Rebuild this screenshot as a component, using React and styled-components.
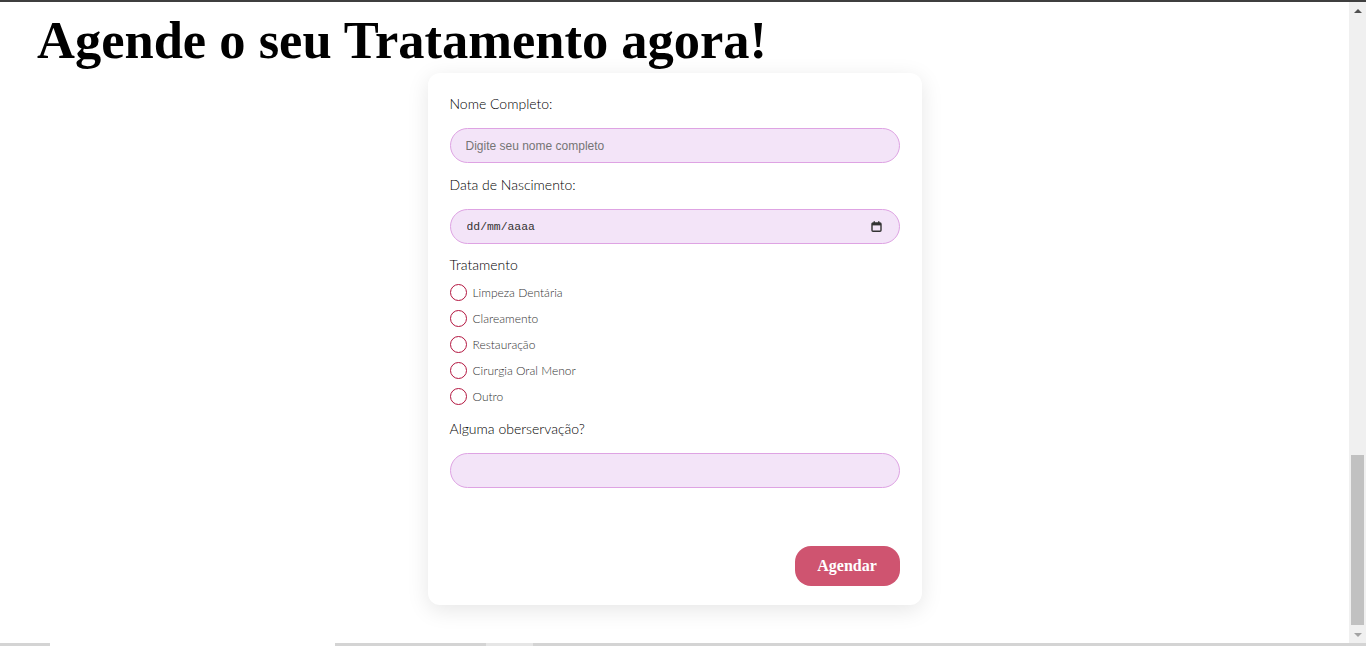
import React from 'react';
import styled, { createGlobalStyle } from 'styled-components';

const GlobalStyle = createGlobalStyle`
    body {
        margin: 0;
        background: #fff;
        font-family: Lato, "Open Sans", sans-serif;
    }
`;

const Window = styled.div`
    display: flex;
    flex-direction: column;
    height: 646px;
    overflow: hidden;
`;

const TopEdge = styled.div`
    height: 2px;
    background: #3f3f3f;
`;

const Viewport = styled.div`
    flex: 1;
    display: flex;
    min-height: 0;
`;

const Page = styled.div`
    flex: 1;
    overflow: hidden;
`;

const ScrollBar = styled.div`
    width: 17px;
    display: flex;
    flex-direction: column;
    background: #f0f0f0;
`;

const ScrollArrow = styled.div`
    height: 17px;
    display: flex;
    align-items: center;
    justify-content: center;
`;

const ScrollTrack = styled.div`
    flex: 1;
    display: flex;
    flex-direction: column;
    justify-content: flex-end;
    padding: 0 2px 1px;
`;

const ScrollThumb = styled.div`
    height: 170px;
    background: #c1c1c1;
`;

const BottomEdge = styled.div`
    height: 3px;
    display: flex;
    background: #d4d4d4;
`;

const EdgeSegment = styled.div`
    margin-left: ${(p) => p.$offset}px;
    width: ${(p) => p.$width}px;
    background: ${(p) => p.$color};
`;

const Title = styled.h1`
    margin: 12px 0 0 37px;
    font-family: "Liberation Serif", serif;
    font-weight: 700;
    font-size: 52.5px;
    line-height: 52px;
    color: #000;
`;

const Card = styled.form`
    width: 450px;
    margin: 7px auto 0;
    padding: 21px 22px 19px;
    background: #fff;
    border-radius: 12px;
    box-shadow: 0 5px 22px rgba(0, 0, 0, 0.1);
`;

const Label = styled.label`
    display: block;
    margin: ${(p) => p.$top}px 0 ${(p) => (p.$tight ? 4 : 14)}px;
    font-size: 14px;
    font-weight: 300;
    line-height: 20px;
    color: #000;
`;

const Input = styled.input`
    box-sizing: border-box;
    display: block;
    width: 100%;
    height: 35px;
    padding: 0 15px;
    background: #f3e4f8;
    border: 1px solid #dea3e3;
    border-radius: 18px;
    outline: none;
    font-family: "Liberation Sans", Arial, sans-serif;
    font-size: 12px;
    color: #222;

    &::placeholder {
        color: #757575;
    }
`;

const DateField = styled.div`
    box-sizing: border-box;
    display: flex;
    align-items: center;
    justify-content: space-between;
    height: 35px;
    padding: 0 17px 0 16px;
    background: #f3e4f8;
    border: 1px solid #dea3e3;
    border-radius: 18px;
`;

const DateText = styled.input`
    flex: 1;
    border: none;
    background: transparent;
    outline: none;
    padding: 0;
    font-family: "Liberation Mono", "DejaVu Sans Mono", monospace;
    font-size: 11.4px;
    color: #333;

    &::placeholder {
        color: #333;
    }
`;

const Options = styled.div`
    display: flex;
    flex-direction: column;
`;

const Option = styled.label`
    display: flex;
    align-items: center;
    gap: 6px;
    height: 26px;
    font-size: 12px;
    font-weight: 300;
    color: #333;
`;

const Radio = styled.input`
    appearance: none;
    margin: 0;
    width: 17px;
    height: 17px;
    border: 1.5px solid #b3153f;
    border-radius: 50%;
    background: #fff;
`;

const Footer = styled.div`
    display: flex;
    justify-content: flex-end;
    margin-top: 58px;
`;

const Button = styled.button`
    width: 105px;
    height: 40px;
    border: none;
    border-radius: 16px;
    background: #cf5470;
    color: #fff;
    font-family: "Liberation Serif", serif;
    font-weight: 700;
    font-size: 16px;
    cursor: pointer;
`;

const CalendarIcon = () => (
    <svg width="11" height="11" viewBox="0 0 11 11" fill="none">
        <rect x="1" y="2" width="9" height="8.2" rx="1" stroke="#333" strokeWidth="1.4" />
        <rect x="1" y="2" width="9" height="2.4" fill="#333" />
        <rect x="2.6" y="0.2" width="1.3" height="2.4" fill="#333" />
        <rect x="7.1" y="0.2" width="1.3" height="2.4" fill="#333" />
    </svg>
);

const Arrow = ({ up, color }) => (
    <svg width="8" height="4" viewBox="0 0 8 4">
        <path d={up ? 'M0 4 L4 0 L8 4 Z' : 'M0 0 L8 0 L4 4 Z'} fill={color} />
    </svg>
);

const tratamentos = [
    'Limpeza Dentária',
    'Clareamento',
    'Restauração',
    'Cirurgia Oral Menor',
    'Outro',
];

function App() {
    return (
        <>
            <GlobalStyle />
            <Window>
                <TopEdge />
                <Viewport>
                    <Page>
                        <Title>Agende o seu Tratamento agora!</Title>
                        <Card onSubmit={(e) => e.preventDefault()}>
                            <Label $top={0} htmlFor="nome">Nome Completo:</Label>
                            <Input id="nome" type="text" placeholder="Digite seu nome completo" />

                            <Label $top={12} htmlFor="nascimento">Data de Nascimento:</Label>
                            <DateField>
                                <DateText id="nascimento" type="text" placeholder="dd/mm/aaaa" />
                                <CalendarIcon />
                            </DateField>

                            <Label $top={11} $tight>Tratamento</Label>
                            <Options>
                                {tratamentos.map((t) => (
                                    <Option key={t}>
                                        <Radio type="radio" name="tratamento" value={t} />
                                        {t}
                                    </Option>
                                ))}
                            </Options>

                            <Label $top={10} htmlFor="obs">Alguma oberservação?</Label>
                            <Input id="obs" type="text" />

                            <Footer>
                                <Button type="submit">Agendar</Button>
                            </Footer>
                        </Card>
                    </Page>
                    <ScrollBar>
                        <ScrollArrow><Arrow up color="#505050" /></ScrollArrow>
                        <ScrollTrack>
                            <ScrollThumb />
                        </ScrollTrack>
                        <ScrollArrow><Arrow color="#a3a3a3" /></ScrollArrow>
                    </ScrollBar>
                </Viewport>
                <BottomEdge>
                    <EdgeSegment $offset={50} $width={285} $color="#fff" />
                    <EdgeSegment $offset={151} $width={47} $color="#e6e6e6" />
                </BottomEdge>
            </Window>
        </>
    );
}

export default App;
